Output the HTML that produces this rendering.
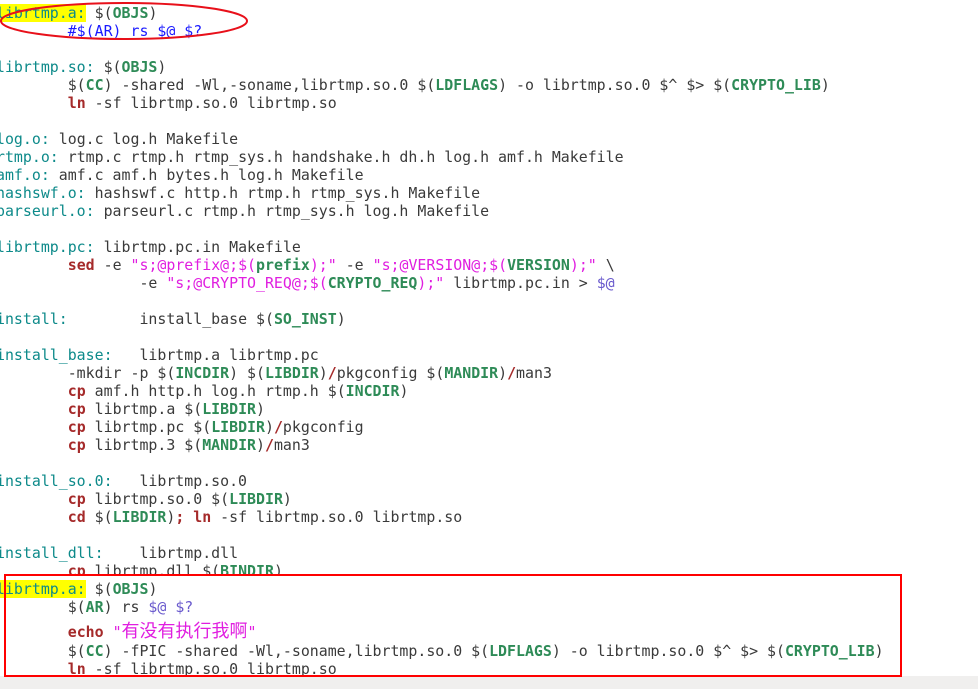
<!DOCTYPE html>
<html><head><meta charset="utf-8"><style>
html,body{margin:0;padding:0;background:#fff;width:978px;height:689px;overflow:hidden;position:relative}
.l{position:absolute;left:-4px;height:18px;line-height:18px;white-space:pre;font-family:"DejaVu Sans Mono","Liberation Mono","Noto Sans CJK SC",monospace;font-size:14.9px;color:#3a3a3a}
.t{color:#0d8a8a}.g{color:#2e8b57;font-weight:bold}.r{color:#a52a2a;font-weight:bold}.m{color:#e01ee0}.s{color:#6a5acd}.c{color:#1a1aff}
.hl{background:#ffff00}
.cjk{font-family:"Noto Sans CJK SC",sans-serif;font-size:18px}
</style></head><body>
<div class="l" style="top:4px"><span class="t hl">librtmp.a:</span> $(<span class="g">OBJS</span>)</div>
<div class="l" style="top:22px"><span class="c">        #$(AR) rs $@ $?</span></div>
<div class="l" style="top:58px"><span class="t">librtmp.so:</span> $(<span class="g">OBJS</span>)</div>
<div class="l" style="top:76px">        $(<span class="g">CC</span>) -shared -Wl,-soname,librtmp.so.0 $(<span class="g">LDFLAGS</span>) -o librtmp.so.0 $^ $&gt; $(<span class="g">CRYPTO_LIB</span>)</div>
<div class="l" style="top:94px">        <span class="r">ln</span> -sf librtmp.so.0 librtmp.so</div>
<div class="l" style="top:130px"><span class="t">log.o:</span> log.c log.h Makefile</div>
<div class="l" style="top:148px"><span class="t">rtmp.o:</span> rtmp.c rtmp.h rtmp_sys.h handshake.h dh.h log.h amf.h Makefile</div>
<div class="l" style="top:166px"><span class="t">amf.o:</span> amf.c amf.h bytes.h log.h Makefile</div>
<div class="l" style="top:184px"><span class="t">hashswf.o:</span> hashswf.c http.h rtmp.h rtmp_sys.h Makefile</div>
<div class="l" style="top:202px"><span class="t">parseurl.o:</span> parseurl.c rtmp.h rtmp_sys.h log.h Makefile</div>
<div class="l" style="top:238px"><span class="t">librtmp.pc:</span> librtmp.pc.in Makefile</div>
<div class="l" style="top:256px">        <span class="r">sed</span> -e <span class="m">"s;@prefix@;$(</span><span class="g">prefix</span><span class="m">);"</span> -e <span class="m">"s;@VERSION@;$(</span><span class="g">VERSION</span><span class="m">);"</span> \</div>
<div class="l" style="top:274px">                -e <span class="m">"s;@CRYPTO_REQ@;$(</span><span class="g">CRYPTO_REQ</span><span class="m">);"</span> librtmp.pc.in &gt; <span class="s">$@</span></div>
<div class="l" style="top:310px"><span class="t">install:</span>        install_base $(<span class="g">SO_INST</span>)</div>
<div class="l" style="top:346px"><span class="t">install_base:</span>   librtmp.a librtmp.pc</div>
<div class="l" style="top:364px">        -mkdir -p $(<span class="g">INCDIR</span>) $(<span class="g">LIBDIR</span>)<span class="r">/</span>pkgconfig $(<span class="g">MANDIR</span>)<span class="r">/</span>man3</div>
<div class="l" style="top:382px">        <span class="r">cp</span> amf.h http.h log.h rtmp.h $(<span class="g">INCDIR</span>)</div>
<div class="l" style="top:400px">        <span class="r">cp</span> librtmp.a $(<span class="g">LIBDIR</span>)</div>
<div class="l" style="top:418px">        <span class="r">cp</span> librtmp.pc $(<span class="g">LIBDIR</span>)<span class="r">/</span>pkgconfig</div>
<div class="l" style="top:436px">        <span class="r">cp</span> librtmp.3 $(<span class="g">MANDIR</span>)<span class="r">/</span>man3</div>
<div class="l" style="top:472px"><span class="t">install_so.0:</span>   librtmp.so.0</div>
<div class="l" style="top:490px">        <span class="r">cp</span> librtmp.so.0 $(<span class="g">LIBDIR</span>)</div>
<div class="l" style="top:508px">        <span class="r">cd</span> $(<span class="g">LIBDIR</span>)<span class="r">;</span> <span class="r">ln</span> -sf librtmp.so.0 librtmp.so</div>
<div class="l" style="top:544px"><span class="t">install_dll:</span>    librtmp.dll</div>
<div class="l" style="top:562px">        <span class="r">cp</span> librtmp.dll $(<span class="g">BINDIR</span>)</div>
<div style="position:absolute;left:0;top:576px;width:978px;height:110px;background:#fff"></div>
<div class="l" style="top:580px"><span class="t hl">librtmp.a:</span> $(<span class="g">OBJS</span>)</div>
<div class="l" style="top:598px">        $(<span class="g">AR</span>) rs <span class="s">$@ $?</span></div>
<div class="l" style="top:618px;height:24px;line-height:24px">        <span class="r">echo</span> <span class="m">"<span class="cjk">有没有执行我啊</span>"</span></div>
<div class="l" style="top:642px">        $(<span class="g">CC</span>) -fPIC -shared -Wl,-soname,librtmp.so.0 $(<span class="g">LDFLAGS</span>) -o librtmp.so.0 $^ $&gt; $(<span class="g">CRYPTO_LIB</span>)</div>
<div class="l" style="top:660px">        <span class="r">ln</span> -sf librtmp.so.0 librtmp.so</div>
<div style="position:absolute;left:0;top:676px;width:978px;height:13px;background:#f0efee"></div>
<div style="position:absolute;left:4px;top:574px;width:894px;height:99px;border:2px solid #f00"></div>
<svg style="position:absolute;left:0;top:0" width="978" height="60"><ellipse cx="124" cy="21" rx="123" ry="18" fill="none" stroke="#e8101a" stroke-width="2"/></svg>
</body></html>
